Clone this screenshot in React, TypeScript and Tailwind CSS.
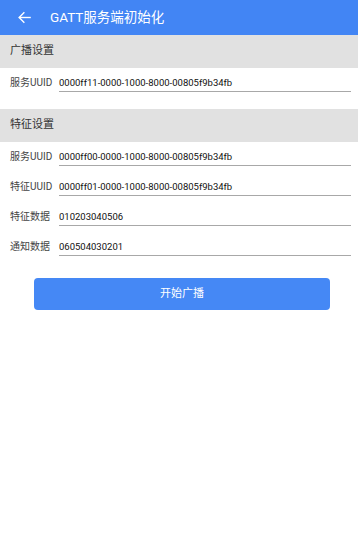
import React from "react";

const font = { fontFamily: 'Roboto, "Noto Sans CJK SC", sans-serif' };

function Row({ label, value }: { label: string; value: string }) {
  return (
    <div className="flex h-[30px] items-start">
      <div className="w-[59px] shrink-0 pl-[10px] pt-[9px] text-[10px] leading-[12px] text-[#444]">{label}</div>
      <div className="mr-[7px] flex-1 border-b border-[#a8a8a8] pt-[9px] pb-[2px] text-[9.5px] leading-[12px] text-[#111]">
        {value}
      </div>
    </div>
  );
}

function Section({ title }: { title: string }) {
  return (
    <div className="flex h-[33px] items-center bg-[#e1e1e1] pl-[10px] text-[11px] text-[#333]">{title}</div>
  );
}

export default function App() {
  return (
    <div className="h-[539px] w-[358px] bg-white" style={font}>
      <div className="flex h-[35px] items-center bg-[#4285f4] text-white">
        <svg className="ml-[17px]" width="15" height="15" viewBox="0 0 24 24" fill="none" stroke="white" strokeWidth="2.2" strokeLinecap="square">
          <path d="M21 12H4" />
          <path d="M11 4.5L3.5 12L11 19.5" />
        </svg>
        <span className="ml-[18px] text-[13.5px] font-normal">GATT服务端初始化</span>
      </div>
      <Section title="广播设置" />
      <Row label="服务UUID" value="0000ff11-0000-1000-8000-00805f9b34fb" />
      <div className="h-[11px]" />
      <Section title="特征设置" />
      <Row label="服务UUID" value="0000ff00-0000-1000-8000-00805f9b34fb" />
      <Row label="特征UUID" value="0000ff01-0000-1000-8000-00805f9b34fb" />
      <Row label="特征数据" value="010203040506" />
      <Row label="通知数据" value="060504030201" />
      <div className="flex pt-[16px] pl-[34px]">
        <button className="h-[32px] w-[296px] rounded-[4px] bg-[#4588f5] text-[11px] text-white">开始广播</button>
      </div>
    </div>
  );
}
